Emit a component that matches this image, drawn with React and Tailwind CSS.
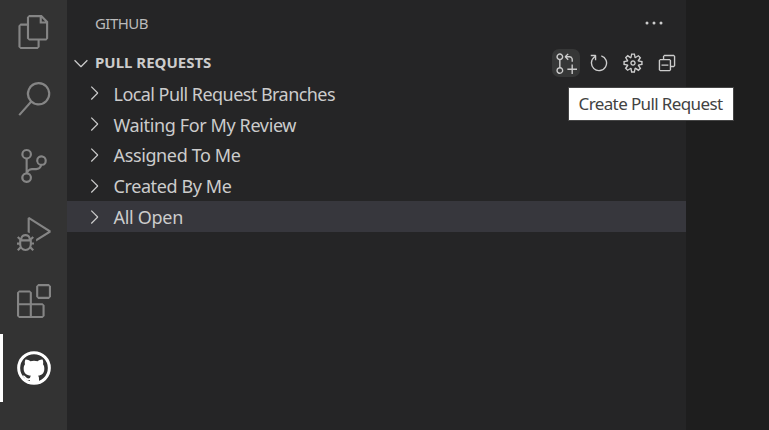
import React from 'react';
import {
  VscSearch, VscSourceControl, VscDebugAlt, VscGitPullRequestCreate, VscChevronRight, VscChevronDown,
} from 'react-icons/vsc';

function Glyph({ size, box, d }) {
  return (
    <svg width={size} height={size} viewBox={`0 0 ${box} ${box}`} fill="currentColor" fillRule="evenodd">
      <path d={d} />
    </svg>
  );
}

const FilesIcon = ({ size }) => (
  <Glyph size={size} box={24} d="M17.5 0h-9L7 1.5V6H2.5L1 7.5v15.07L2.5 24h12.07L16 22.57V18h4.7l1.3-1.43V4.5L17.5 0zm0 2.12l2.38 2.38H17.5V2.12zm-3 20.38h-12v-15H7v9.07L8.5 18h6v4.5zm6-6h-12v-15H16V6h4.5v10.5z" />
);
const ExtensionsIcon = ({ size }) => (
  <Glyph size={size} box={24} d="M13.5 1.5L15 0h7.5L24 1.5V9l-1.5 1.5H15L13.5 9V1.5zm1.5 0V9h7.5V1.5H15zM0 15V6l1.5-1.5H9L10.5 6v7.5H18l1.5 1.5v7.5L18 24H1.5L0 22.5V15zm9-1.5V6H1.5v7.5H9zM9 15H1.5v7.5H9V15zm1.5 7.5H18V15h-7.5v7.5z" />
);
const RefreshIcon = ({ size }) => (
  <Glyph size={size} box={16} d="M4.681 3H2V2h3.5l.5.5V6H5V4a5 5 0 1 0 4.53-.761l.302-.954A6 6 0 1 1 4.681 3z" />
);
const GearIcon = ({ size }) => (
  <Glyph size={size} box={16} d="M9.1 4.4L8.6 2H7.4l-.5 2.4-.7.3-2-1.3-.9.8 1.3 2-.2.7-2.4.5v1.2l2.4.5.3.8-1.3 2 .8.8 2-1.3.8.3.4 2.3h1.2l.5-2.4.8-.3 2 1.3.8-.8-1.3-2 .3-.8 2.3-.4V7.4l-2.4-.5-.3-.8 1.3-2-.8-.8-2 1.3-.7-.2zM9.4 1l.5 2.4L12 2.1l2 2-1.4 2.1 2.4.4v2.8l-2.4.5L14 12l-2 2-2.1-1.4-.5 2.4H6.6l-.5-2.4L4 13.9l-2-2 1.4-2.1L1 9.4V6.6l2.4-.5L2.1 4l2-2 2.1 1.4.4-2.4h2.8zm.6 7c0 1.1-.9 2-2 2s-2-.9-2-2 .9-2 2-2 2 .9 2 2zM8 9c.6 0 1-.4 1-1s-.4-1-1-1-1 .4-1 1 .4 1 1 1z" />
);
const CollapseIcon = ({ size }) => (
  <Glyph size={size} box={16} d="M9 9H4v1h5V9zM5 3l1-1h7l1 1v7l-1 1h-2v2l-1 1H3l-1-1V6l1-1h2V3zm1 2h4l1 1v4h2V3H6v2zm4 1H3v7h7V6z" />
);
const GithubIcon = ({ size }) => (
  <svg width={size} height={size} viewBox="0 0 102 102" fill="none">
    <circle cx="51" cy="51" r="46" stroke="currentColor" strokeWidth="9" />
    <path fill="currentColor" d="M25 26c5-1 11 2 15 5 7-2 15-2 22 0 4-3 10-6 15-5 2 5 2 9 1 14 3 4 4 8 4 13 0 13-7 19-19 21 3 3 3 6 3 10v15H39V87c-10 2-14-2-17-7-2-3-4-4-6-6 9-2 10 6 15 8 3 1 6 0 8-1 0-3 1-5 3-7-14-2-22-8-22-21 0-5 1-9 4-13-1-5-1-9 1-14z" />
  </svg>
);

const activities = [FilesIcon, VscSearch, VscSourceControl, VscDebugAlt, ExtensionsIcon, GithubIcon];
const actions = [VscGitPullRequestCreate, RefreshIcon, GearIcon, CollapseIcon];
const rows = [
  { label: 'Local Pull Request Branches', spacing: 'tracking-[-0.55px]' },
  { label: 'Waiting For My Review', spacing: 'tracking-[-0.37px]' },
  { label: 'Assigned To Me', spacing: 'tracking-[-0.37px]' },
  { label: 'Created By Me', spacing: 'tracking-[-0.4px]' },
  { label: 'All Open', spacing: 'tracking-[-0.3px]' },
];

export default function App() {
  return (
    <div className="relative flex h-[430px] w-[769px] overflow-hidden bg-[#1e1e1e] font-['Noto_Sans','Open_Sans',sans-serif] text-[#cccccc]">
      <nav className="flex w-[67px] shrink-0 flex-col bg-[#333333]">
        <div className="-mt-[2px]">
          {activities.map((Icon, i) => (
            <div key={i} className={`flex h-[67.3px] items-center justify-center border-l-[3px] pr-[3px] ${i === 5 ? 'border-white text-white' : 'border-transparent text-[#858585]'}`}>
              <Icon size={34} />
            </div>
          ))}
        </div>
      </nav>
      <aside className="flex w-[619px] shrink-0 flex-col bg-[#252526]">
        <header className="flex h-[47px] items-center justify-between pr-[23px] pl-7">
          <h2 className="text-[15px] tracking-[-0.55px] text-[#bbbbbb]">GITHUB</h2>
          <svg width="18" height="6" viewBox="0 0 18 6" fill="currentColor" className="mb-[2px]">
            <circle cx="2" cy="3" r="1.5" />
            <circle cx="9" cy="3" r="1.5" />
            <circle cx="16" cy="3" r="1.5" />
          </svg>
        </header>
        <div className="flex h-[31px] items-center pl-[3px]">
          <VscChevronDown size={22} />
          <h3 className="ml-[3px] text-[15px] font-bold whitespace-nowrap">PULL REQUESTS</h3>
          <div className="ml-auto flex gap-[5.7px] pr-[5.3px]">
            {actions.map((Icon, i) => (
              <button key={i} className={`flex size-7 items-center justify-center rounded-[7px] ${i === 0 ? 'bg-[#363737]' : ''}`}>
                <Icon size={22} />
              </button>
            ))}
          </div>
        </div>
        <ul>
          {rows.map((row, i) => (
            <li key={row.label} className={`flex h-[30.8px] items-center pl-4 ${i === 4 ? 'bg-[#37373d]' : ''}`}>
              <VscChevronRight size={22} />
              <span className={`ml-[8.5px] pt-[2px] text-[18px] whitespace-nowrap ${row.spacing}`}>{row.label}</span>
            </li>
          ))}
        </ul>
      </aside>
      <div className="absolute top-[87px] left-[568px] flex h-[34px] w-[166px] items-center justify-center border border-[#454545] bg-white pr-px text-[17px] tracking-[-0.62px] whitespace-nowrap text-[#424242]">
        Create Pull Request
      </div>
    </div>
  );
}
